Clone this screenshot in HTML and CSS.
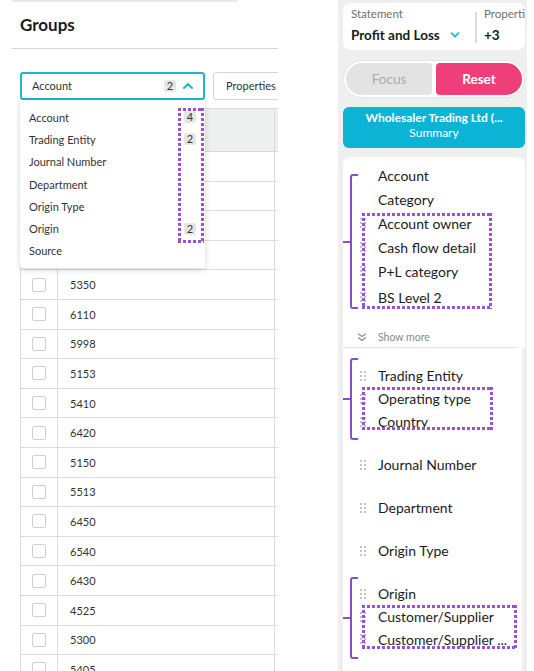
FILE: index.html
```html
<!DOCTYPE html>
<html lang="en">
<head>
<meta charset="utf-8">
<title>Groups</title>
<link rel="stylesheet" href="styles.css">
</head>
<body>
<div class="page">
  <section class="groups">
    <div class="topline"></div>
    <h2 class="title">Groups</h2>
    <div class="divider"></div>
    <div class="controls">
      <div class="select">
        <span class="select-label">Account</span>
        <span class="badge">2</span>
        <svg class="chev-up" width="10" height="7" viewBox="0 0 10 7"><path d="M1 6 L5 2 L9 6" fill="none" stroke="#1db5d0" stroke-width="1.8" stroke-linecap="round" stroke-linejoin="round"/></svg>
      </div>
      <button class="props">Properties</button>
      <div class="menu">
        <div class="menu-item"><span>Account</span><span class="badge">4</span></div>
        <div class="menu-item"><span>Trading Entity</span><span class="badge">2</span></div>
        <div class="menu-item"><span>Journal Number</span></div>
        <div class="menu-item"><span>Department</span></div>
        <div class="menu-item"><span>Origin Type</span></div>
        <div class="menu-item"><span>Origin</span><span class="badge">2</span></div>
        <div class="menu-item"><span>Source</span></div>
      </div>
      <div class="dots dots-menu"></div>
    </div>
    <div class="table">
      <div class="thead"><div class="c1"></div><div class="c2"></div><div class="c3"></div></div>
      <div class="row"><div class="c1"><span class="cb"></span></div><div class="c2"></div><div class="c3"></div></div>
      <div class="row"><div class="c1"><span class="cb"></span></div><div class="c2"></div><div class="c3"></div></div>
      <div class="row"><div class="c1"><span class="cb"></span></div><div class="c2"></div><div class="c3"></div></div>
      <div class="row"><div class="c1"><span class="cb"></span></div><div class="c2"></div><div class="c3"></div></div>
      <div class="row"><div class="c1"><span class="cb"></span></div><div class="c2">5350</div><div class="c3"></div></div>
      <div class="row"><div class="c1"><span class="cb"></span></div><div class="c2">6110</div><div class="c3"></div></div>
      <div class="row"><div class="c1"><span class="cb"></span></div><div class="c2">5998</div><div class="c3"></div></div>
      <div class="row"><div class="c1"><span class="cb"></span></div><div class="c2">5153</div><div class="c3"></div></div>
      <div class="row"><div class="c1"><span class="cb"></span></div><div class="c2">5410</div><div class="c3"></div></div>
      <div class="row"><div class="c1"><span class="cb"></span></div><div class="c2">6420</div><div class="c3"></div></div>
      <div class="row"><div class="c1"><span class="cb"></span></div><div class="c2">5150</div><div class="c3"></div></div>
      <div class="row"><div class="c1"><span class="cb"></span></div><div class="c2">5513</div><div class="c3"></div></div>
      <div class="row"><div class="c1"><span class="cb"></span></div><div class="c2">6450</div><div class="c3"></div></div>
      <div class="row"><div class="c1"><span class="cb"></span></div><div class="c2">6540</div><div class="c3"></div></div>
      <div class="row"><div class="c1"><span class="cb"></span></div><div class="c2">6430</div><div class="c3"></div></div>
      <div class="row"><div class="c1"><span class="cb"></span></div><div class="c2">4525</div><div class="c3"></div></div>
      <div class="row"><div class="c1"><span class="cb"></span></div><div class="c2">5300</div><div class="c3"></div></div>
      <div class="row"><div class="c1"><span class="cb"></span></div><div class="c2">5405</div><div class="c3"></div></div>
    </div>
  </section>

  <div class="gap"></div>

  <aside class="side">
    <div class="stmt">
      <div class="stmt-main">
        <div class="stmt-label">Statement</div>
        <div class="stmt-value">Profit and Loss
          <svg class="chev-down" width="10" height="6" viewBox="0 0 10 6"><path d="M1.5 1.2 L5 4.6 L8.5 1.2" fill="none" stroke="#1db5d0" stroke-width="1.7" stroke-linecap="round" stroke-linejoin="round"/></svg>
        </div>
      </div>
      <div class="stmt-div"></div>
      <div class="stmt-props">
        <div class="stmt-label">Properties</div>
        <div class="stmt-value">+3</div>
      </div>
    </div>

    <div class="pill">
      <button class="focus">Focus</button>
      <button class="reset">Reset</button>
    </div>

    <div class="entity">
      <div class="entity-name">Wholesaler Trading Ltd (...</div>
      <div class="entity-sub">Summary</div>
    </div>

    <div class="card">
      <div class="item nohandle"><span class="handle"></span>Account</div>
      <div class="item nohandle"><span class="handle"></span>Category</div>
      <div class="item"><span class="handle"></span>Account owner</div>
      <div class="item"><span class="handle"></span>Cash flow detail</div>
      <div class="item"><span class="handle"></span>P+L category</div>
      <div class="item item-last"><span class="handle"></span>BS Level 2</div>
      <div class="more">
        <svg width="10" height="9" viewBox="0 0 10 9"><path d="M1.5 1 L5 3.6 L8.5 1 M1.5 4.8 L5 7.4 L8.5 4.8" fill="none" stroke="#8c8c8c" stroke-width="1.2" stroke-linecap="round" stroke-linejoin="round"/></svg>
        Show more
      </div>
      <div class="sep"></div>
      <div class="bracket bracket-account"></div>
      <div class="dots dots-account"></div>
    </div>

    <div class="list">
      <div class="block">
        <div class="item"><span class="handle"></span>Trading Entity</div>
        <div class="item"><span class="handle"></span>Operating type</div>
        <div class="item"><span class="handle"></span>Country</div>
        <div class="bracket bracket-group"></div>
        <div class="dots dots-trading"></div>
      </div>
      <div class="block">
        <div class="item"><span class="handle"></span>Journal Number</div>
      </div>
      <div class="block">
        <div class="item"><span class="handle"></span>Department</div>
      </div>
      <div class="block">
        <div class="item"><span class="handle"></span>Origin Type</div>
      </div>
      <div class="block">
        <div class="item"><span class="handle"></span>Origin</div>
        <div class="item"><span class="handle"></span>Customer/Supplier</div>
        <div class="item item-up"><span class="handle"></span>Customer/Supplier ...</div>
        <div class="bracket bracket-origin"></div>
        <div class="dots dots-origin"></div>
      </div>
    </div>
  </aside>
</div>
</body>
</html>
```

FILE: styles.css
```css
* {
  box-sizing: border-box;
  margin: 0;
  padding: 0;
}

body {
  margin: 0;
  width: 534px;
  height: 671px;
  overflow: hidden;
  background: #fff;
  font-family: "Lato", "Liberation Sans", sans-serif;
  color: #222;
}

.page {
  display: flex;
  height: 671px;
}

/* ---------- left: groups ---------- */
.groups {
  width: 278px;
  flex: none;
  overflow: hidden;
}

.topline {
  margin-left: 12px;
  width: 225px;
  height: 2px;
  background: #e8e8e8;
}

.title {
  margin: 12px 0 0 20px;
  font-size: 17px;
  line-height: 21px;
  font-weight: 700;
  color: #1a1a1a;
}

.divider {
  margin: 13px 0 0 12px;
  height: 1px;
  background: #d4d4d4;
}

.controls {
  position: relative;
  margin-top: 23px;
  padding-left: 20px;
  display: flex;
  gap: 8px;
  height: 28px;
}

.select {
  width: 185px;
  flex: none;
  height: 28px;
  border: 2px solid #1db5d0;
  border-radius: 3px;
  display: flex;
  align-items: center;
  padding: 0 10px 1px;
  font-size: 11px;
  color: #333;
}

.select-label {
  flex: 1;
}

.badge {
  display: inline-block;
  width: 12px;
  height: 12px;
  line-height: 12px;
  text-align: center;
  font-size: 11px;
  background: #e6e6e6;
  border-radius: 2px;
  color: #333;
}

.chev-up {
  margin-left: 7px;
  flex: none;
}

.props {
  width: 120px;
  flex: none;
  height: 28px;
  border: 1px solid #d5d5d5;
  border-radius: 3px;
  background: #fff;
  padding: 0 0 1px 12px;
  text-align: left;
  font-family: inherit;
  font-size: 11px;
  color: #333;
}

.menu {
  position: absolute;
  left: 20px;
  top: 28px;
  width: 185px;
  padding: 6px 0 6px;
  background: #fff;
  border-radius: 0 0 3px 3px;
  box-shadow: 0 2px 6px rgba(0, 0, 0, 0.16);
  z-index: 2;
}

.menu-item {
  height: 22.3px;
  display: flex;
  align-items: center;
  justify-content: space-between;
  padding: 0 9px;
  font-size: 11px;
  color: #333;
}

.table {
  margin: 8px 0 0 20px;
  width: 320px;
}

.thead,
.row {
  display: flex;
}

.thead {
  height: 44px;
  background: #eef0ef;
  border-top: 1px solid #dcdcdc;
  border-bottom: 1px solid #d8d8d8;
}

.row {
  height: 29.6px;
  border-bottom: 1px solid #dcdcdc;
  font-size: 11px;
  color: #333;
}

.c1 {
  width: 38px;
  flex: none;
  border-left: 1px solid #dcdcdc;
  border-right: 1px solid #dcdcdc;
  display: flex;
  align-items: center;
  justify-content: center;
}

.c2 {
  width: 217px;
  flex: none;
  border-right: 1px solid #dcdcdc;
  display: flex;
  align-items: center;
  padding-left: 12px;
}

.c3 {
  flex: 1;
}

.cb {
  width: 14px;
  height: 14px;
  border: 1px solid #cfcfcf;
  border-radius: 2px;
  background: #fff;
}

/* ---------- dotted annotation boxes ---------- */
.dots {
  position: absolute;
  z-index: 3;
  background:
    repeating-linear-gradient(90deg, #9b51d4 0 3px, transparent 3px 5px) left top / 100% 3px no-repeat,
    repeating-linear-gradient(90deg, #9b51d4 0 3px, transparent 3px 5px) left bottom / 100% 3px no-repeat,
    repeating-linear-gradient(180deg, #9b51d4 0 3px, transparent 3px 5px) left top / 3px 100% no-repeat,
    repeating-linear-gradient(180deg, #9b51d4 0 3px, transparent 3px 5px) right top / 3px 100% no-repeat;
}

.dots-menu {
  left: 178px;
  top: 36px;
  width: 26px;
  height: 135px;
}

/* ---------- right: side panel ---------- */
.gap {
  width: 60px;
  flex: none;
}

.side {
  width: 189px;
  flex: none;
  background: #efefef;
  padding: 3px 2px 0 5px;
  display: flex;
  flex-direction: column;
}

.stmt {
  flex: none;
  height: 47px;
  background: #fff;
  border-radius: 8px;
  padding: 4px 0 0 8px;
  display: flex;
  overflow: hidden;
}

.stmt-main {
  width: 124px;
  flex: none;
}

.stmt-label {
  font-size: 11.5px;
  line-height: 13px;
  color: #707070;
  white-space: nowrap;
}

.stmt-value {
  margin-top: 6px;
  font-size: 13.5px;
  line-height: 18px;
  font-weight: 700;
  color: #1a1a1a;
  display: flex;
  align-items: center;
  white-space: nowrap;
}

.chev-down {
  margin-left: 10px;
  flex: none;
}

.stmt-div {
  width: 2px;
  height: 31px;
  margin-top: 5px;
  background: #dadada;
  flex: none;
}

.stmt-props {
  margin-left: 7px;
  flex: none;
}

.pill {
  flex: none;
  margin-top: 10px;
  height: 38px;
  background: #fff;
  border: 1px solid #e4e4e4;
  border-radius: 19px;
  padding: 2px;
  display: flex;
  gap: 4px;
}

.pill button {
  flex: 1;
  border: none;
  font-family: inherit;
  font-size: 13.5px;
}

.focus {
  background: #e3e3e3;
  color: #ababab;
  border-radius: 16px 4px 4px 16px;
}

.reset {
  background: #ee3f7a;
  color: #fff;
  font-weight: 700;
  border-radius: 4px 16px 16px 4px;
}

.entity {
  flex: none;
  margin-top: 9px;
  height: 41px;
  background: #0bb4d5;
  border-radius: 6px;
  color: #fff;
  text-align: center;
  padding-top: 3px;
  font-size: 12px;
  line-height: 15px;
}

.entity-name {
  font-weight: 700;
}

.card {
  flex: none;
  position: relative;
  margin-top: 9px;
  background: #fff;
  border-radius: 8px 8px 0 0;
  padding-top: 6px;
}

.item {
  height: 24px;
  display: flex;
  align-items: center;
  padding-left: 17px;
  font-size: 14px;
  color: #1c1c1c;
  white-space: nowrap;
}

.item-last {
  margin-top: 2px;
}

.item-up {
  padding-bottom: 1px;
}

.handle {
  width: 6px;
  height: 10px;
  margin-right: 12px;
  flex: none;
  background: radial-gradient(circle, #c3c3c3 0.95px, transparent 1.15px) -1px -1px / 4px 4px;
}

.nohandle .handle {
  visibility: hidden;
}

.more {
  margin-top: 18px;
  height: 20px;
  display: flex;
  align-items: center;
  padding-left: 14px;
  font-size: 10.5px;
  color: #8a8a8a;
}

.more svg {
  margin-right: 11px;
}

.sep {
  height: 1px;
  background: #e3e3e3;
  margin-right: 7px;
}

.list {
  flex: 1;
  background: #fff;
  margin-right: 3px;
  padding-top: 6px;
}

.block {
  position: relative;
  padding: 10px 0;
}

.block .item {
  height: 23px;
}

/* purple brackets */
.bracket {
  position: absolute;
  left: 7px;
  width: 8px;
  border: 2px solid #8e4bc6;
  border-right: none;
  border-radius: 3px 0 0 3px;
}

.bracket::before {
  content: "";
  position: absolute;
  left: -9px;
  top: calc(50% - 1px);
  width: 8px;
  height: 2px;
  background: #8e4bc6;
}

.bracket-account {
  top: 17px;
  height: 135px;
}

.bracket-group {
  top: 4px;
  height: 82px;
}

.bracket-origin {
  top: 5px;
  height: 82px;
}

.dots-account {
  left: 19px;
  top: 56px;
  width: 130px;
  height: 96px;
}

.dots-trading {
  left: 19px;
  top: 33px;
  width: 131px;
  height: 43px;
}

.dots-origin {
  left: 19px;
  top: 33px;
  width: 155px;
  height: 44px;
}
```
